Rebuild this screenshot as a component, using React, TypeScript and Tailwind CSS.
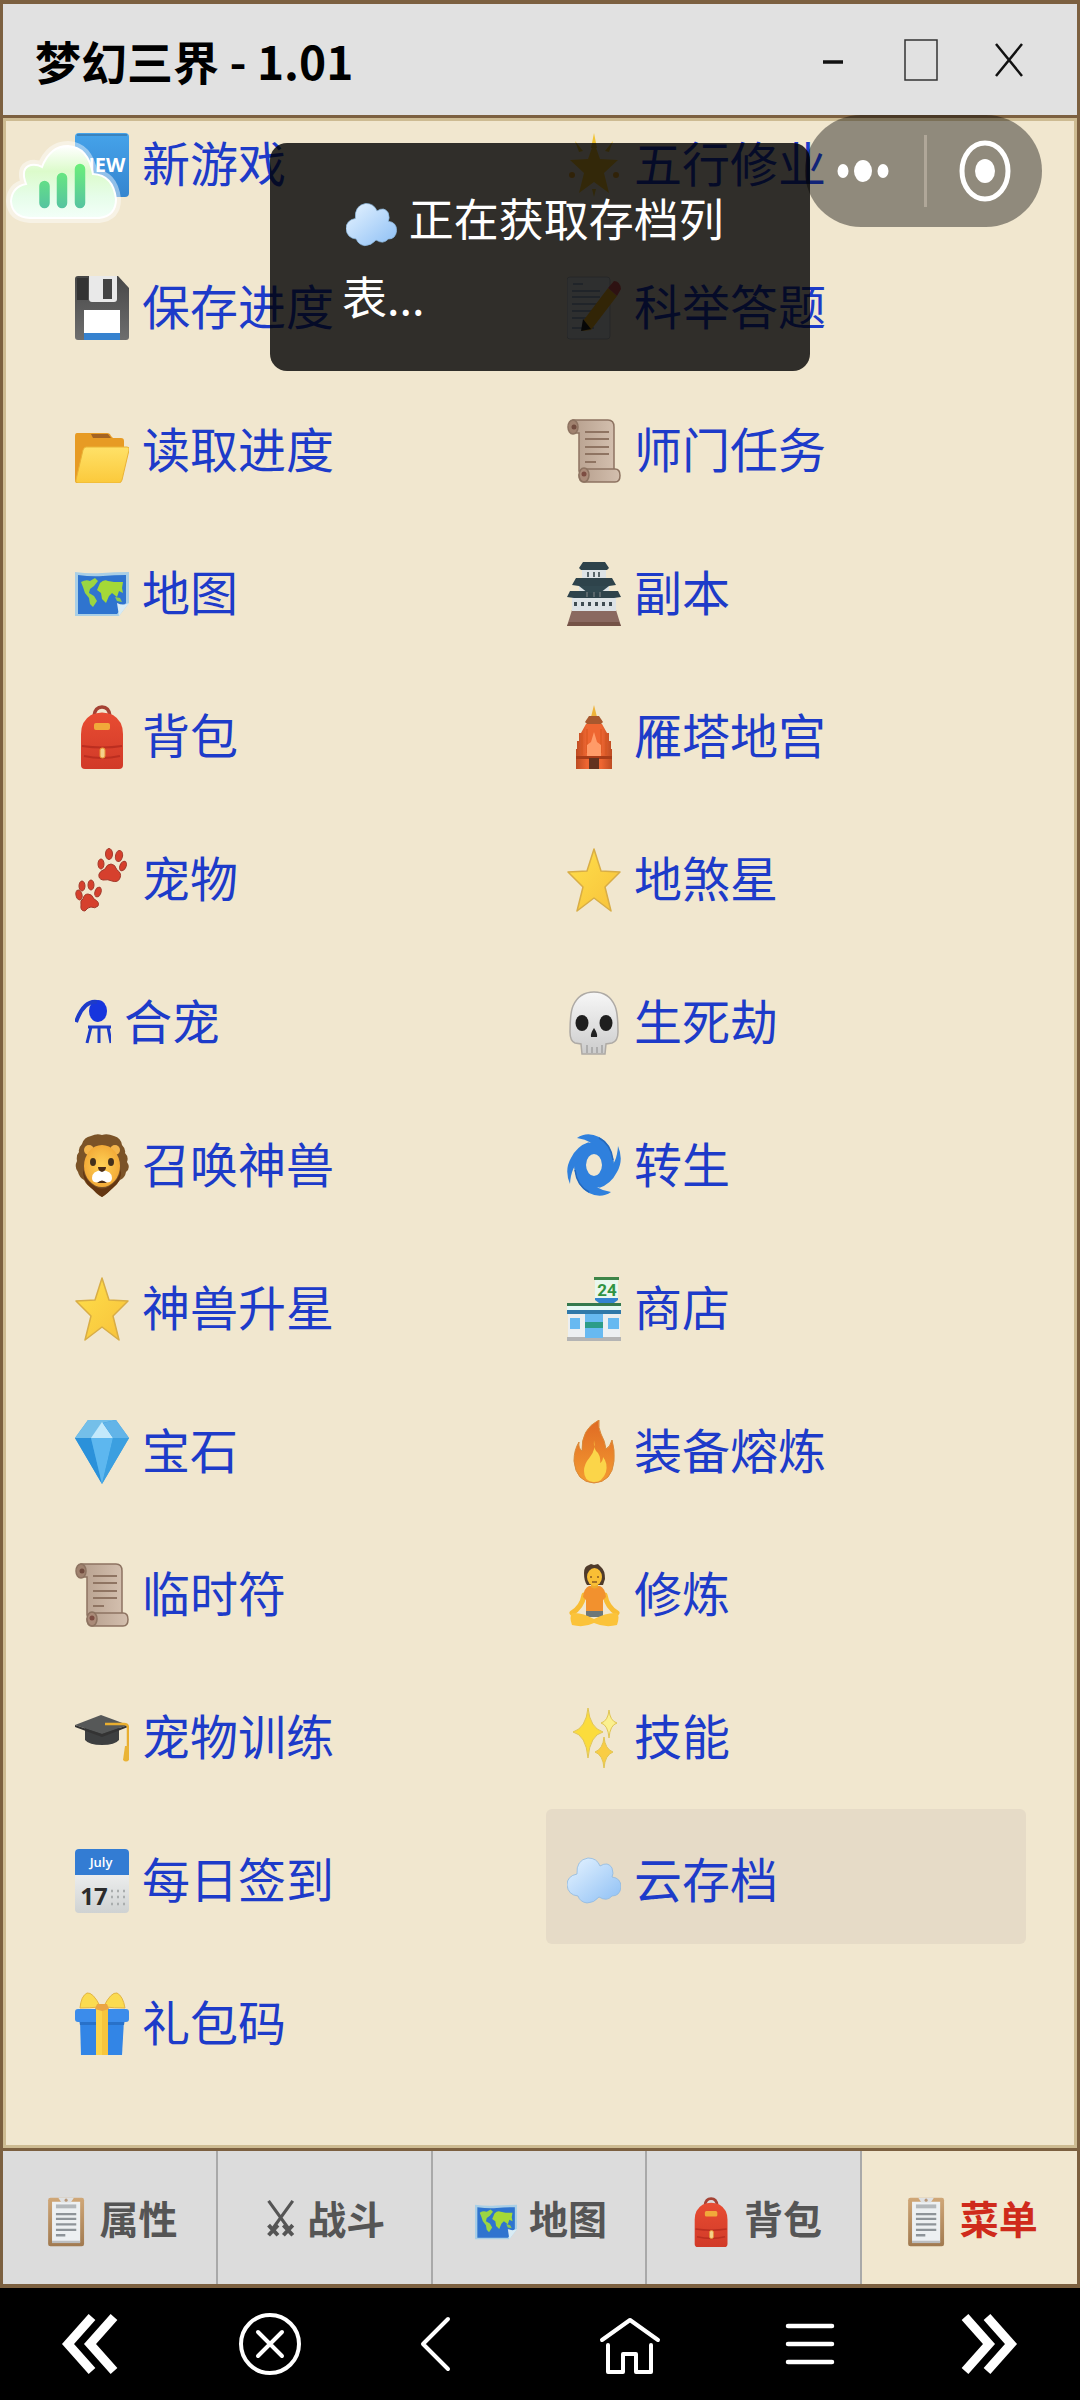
import { useState, type ReactNode } from "react";

const art: Record<string, ReactNode> = {
  new: (
    <>
      <defs><linearGradient id="gNew" x1="0" y1="0" x2="0" y2="1"><stop offset="0" stopColor="#45a3ea" /><stop offset="1" stopColor="#3585cf" /></linearGradient></defs>
      <rect width="54" height="64" rx="4" fill="url(#gNew)" />
      <path d="M2 2h50" stroke="#3a83bd" strokeWidth="2" />
      <text x="27" y="39" textAnchor="middle" fontFamily="Open Sans, sans-serif" fontWeight="700" fontSize="20" fill="#fff">NEW</text>
    </>
  ),
  save: (
    <>
      <defs><linearGradient id="gSave" x1="0" y1="0" x2="0" y2="1"><stop offset="0" stopColor="#474747" /><stop offset="1" stopColor="#6e6e6e" /></linearGradient></defs>
      <path d="M3 0h40l11 12v49q0 3-3 3H3q-3 0-3-3V3q0-3 3-3z" fill="url(#gSave)" />
      <path d="M2 2h11v22H2z" fill="#333" />
      <path d="M14 0h28v23q0 3-3 3H17q-3 0-3-3z" fill="#e9e9e9" />
      <path d="M28 3h9v20h-9z" fill="#444" />
      <path d="M9 34h36v23H9z" fill="#fff" />
      <path d="M9 57h36v7H9z" fill="#3682cf" />
    </>
  ),
  folder: (
    <>
      <defs><linearGradient id="gFold" x1="0" y1="0" x2="0" y2="1"><stop offset="0" stopColor="#ffe168" /><stop offset="1" stopColor="#fbc93b" /></linearGradient></defs>
      <path d="M2 14h30q3 0 4 3l2 2h8q3 0 3 3v14L5 64H2q-2 0-2-3V17q0-3 2-3z" fill="#e79b24" />
      <path d="M16 15h17l3 4H18z" fill="#a36322" />
      <path d="M11 28h41q3 0 2 3l-7 30q-1 3-3 3H3q-3 0-2-3l7-30q1-3 3-3z" fill="url(#gFold)" stroke="#eab235" strokeWidth="1" />
    </>
  ),
  map: (
    <>
      <path d="M0 10q14 2 27 1t27-1v31L44 54H0z" fill="#a9cfe6" />
      <path d="M3 13q14 2 25 1t23-1v28L42 52H3z" fill="#2f74cf" />
      <path d="M6 20q5-3 9-1l5-3 3 3-4 5-4 3-1 4 5 3 3 5-4 6-3-3-1-6-4-5-2-6z" fill="#9bd542" />
      <path d="M25 21q4-4 8-2l6 1 9 0-1 6 1 5-4-2-2 6-5-4-3 3-3 7-4-4-1-6-4-3z" fill="#a4d937" />
      <path d="M40 35l5 1 2 4-5-1z" fill="#8fcb4d" />
      <path d="M54 41L44 54l-2-13q6 3 12 0z" fill="#d9ecf5" />
    </>
  ),
  bag: (
    <>
      <defs><linearGradient id="gBag" x1="0" y1="0" x2="0" y2="1"><stop offset="0" stopColor="#e84c32" /><stop offset="1" stopColor="#d13a28" /></linearGradient></defs>
      <path d="M19 11q1-9 8-9t8 9" fill="none" stroke="#a54234" strokeWidth="3.5" />
      <path d="M16 10q11-5 22 0 10 6 10 19v31q0 4-4 4H10q-4 0-4-4V29q0-13 10-19z" fill="url(#gBag)" />
      <path d="M7 41q20 3 40 0M9 51q18 4 36 0" stroke="#bb2e20" strokeWidth="2" fill="none" />
      <rect x="19" y="18" width="16" height="7" rx="2" fill="#f1a93a" />
      <rect x="25" y="43" width="5" height="10" rx="2" fill="#f5d28a" stroke="#e79030" />
    </>
  ),
  paws: (
    <g fill="#d6402d" stroke="#a33a2c" strokeWidth="1">
      <path d="M36 16q4 0 6 6 5 3 3 8-2 5-8 3-4-2-9-1-5-1-4-6 1-3 6-5 2-5 6-5z" />
      <ellipse cx="26" cy="16" rx="3" ry="5" /><ellipse cx="34" cy="6" rx="3.5" ry="5.5" />
      <ellipse cx="44" cy="8" rx="3.5" ry="5.5" transform="rotate(12 44 8)" /><ellipse cx="48" cy="18" rx="3" ry="5" transform="rotate(25 48 18)" />
      <path d="M13 46q4 0 6 5 6 3 4 7-3 3-7 1-3 0-6 4-5 0-4-6-1-5 2-6 1-5 5-5z" />
      <ellipse cx="4" cy="47" rx="3" ry="5" transform="rotate(-15 4 47)" /><ellipse cx="7" cy="38" rx="3" ry="5" />
      <ellipse cx="16" cy="37" rx="3" ry="5" /><ellipse cx="23" cy="44" rx="3" ry="5" transform="rotate(20 23 44)" />
    </g>
  ),
  flask: (
    <g fill="none" stroke="#1d3bc9" strokeWidth="3">
      <ellipse cx="23" cy="20" rx="9" ry="11" fill="#1735dd" stroke="none" />
      <path d="M1 31Q9 9 22 11" strokeWidth="4" />
      <path d="M13 36h23M16 36l-4 16M24 36v16M33 36l3 16" />
    </g>
  ),
  lion: (
    <>
      <defs><radialGradient id="gLion"><stop offset="0" stopColor="#ffd257" /><stop offset="1" stopColor="#f3ab38" /></radialGradient></defs>
      <path d="M27 1q5-2 12 1 7 2 8 9 4 4 3 8 4 4 2 9 4 6-1 10-1 6-6 8-4 6-9 9-5 6-9 8-5-2-9-8-6-3-9-9-5-3-6-8-4-5-1-11-1-6 2-9-1-4 3-8 2-7 9-8 6-3 11-1z" fill="#7b5327" />
      <path d="M8 35q2 12 13 18 6 3 12 0 11-6 13-18 1 12-8 19-6 6-11 9-6-4-11-9-9-8-8-19z" fill="#643611" />
      <ellipse cx="14" cy="16" rx="5" ry="5" fill="#f4b54c" /><ellipse cx="40" cy="16" rx="5" ry="5" fill="#f4b54c" />
      <ellipse cx="27" cy="32" rx="18" ry="21" fill="url(#gLion)" />
      <ellipse cx="18" cy="28" rx="3" ry="4" fill="#43301c" /><ellipse cx="36" cy="28" rx="3" ry="4" fill="#43301c" />
      <path d="M27 36q10 1 10 8 0 6-10 4-10 2-10-4 0-7 10-8z" fill="#fff" />
      <path d="M23 33h8q0 4-4 5-4-1-4-5zM22 49q5-5 10 0z" fill="#4a2c17" />
    </>
  ),
  star: (
    <>
      <defs><linearGradient id="gStar" x1="0" y1="0" x2="1" y2="1"><stop offset="0" stopColor="#ffe04b" /><stop offset="1" stopColor="#f7c13a" /></linearGradient></defs>
      <path d="M27 1l7 22 19 1-15 15 6 24-17-13-17 13 6-24L1 24l19-1z" fill="url(#gStar)" stroke="#d8ad46" strokeWidth="1.5" strokeLinejoin="round" />
    </>
  ),
  gem: (
    <>
      <path d="M13 0h28l13 18-27 46L0 18z" fill="#3ba0e3" />
      <path d="M13 0h28L27 3 17 18 0 18z" fill="#74bfe9" />
      <path d="M27 2l11 16H16z" fill="#c3e9fb" />
      <path d="M41 0l13 18H38L28 3z" fill="#62b4e8" />
      <path d="M0 18h16l11 46z" fill="#2b91da" /><path d="M16 18h22L27 64z" fill="#5db7ef" /><path d="M38 18h16L27 64z" fill="#3b9fe0" />
    </>
  ),
  scroll: (
    <>
      <defs><linearGradient id="gScr" x1="0" y1="0" x2="1" y2="0"><stop offset="0" stopColor="#b7a08e" /><stop offset="1" stopColor="#d3bfae" /></linearGradient></defs>
      <g stroke="#8d7361" strokeWidth="1.5">
        <path d="M6 1h35q6 0 6 7v44H12V14H6z" fill="url(#gScr)" />
        <path d="M17 50h31q5 0 5 6.5t-5 6.5H17q-5 0-5-7z" fill="url(#gScr)" />
        <ellipse cx="6" cy="8" rx="5" ry="7" fill="#a0826f" /><ellipse cx="17" cy="56" rx="5" ry="7" fill="#aa8b79" />
      </g>
      <circle cx="7" cy="8" r="2.5" fill="#704b3e" /><circle cx="17" cy="55" r="2.5" fill="#7d4d42" />
      <path d="M18 13h24M18 20h24M18 28h24M18 35h24M18 43h11" stroke="#8f7462" strokeWidth="2" />
    </>
  ),
  hat: (
    <>
      <path d="M10 20h34v14q-4 5-17 5t-17-5z" fill="#3d3f40" />
      <path d="M0 19L26 9l27 10-26 9z" fill="#565858" />
      <path d="M0 19l27 9 26-9v2L27 31 0 21z" fill="#333" />
      <path d="M30 18h19q4 0 4 4v21" fill="none" stroke="#e9ae2f" strokeWidth="2.5" />
      <path d="M50 40h4v14q-3 3-6 0z" fill="#eab436" />
    </>
  ),
  calendar: (
    <>
      <defs><linearGradient id="gCal" x1="0" y1="0" x2="0" y2="1"><stop offset="0" stopColor="#fff" /><stop offset="1" stopColor="#cfd2d2" /></linearGradient></defs>
      <rect width="54" height="64" rx="4" fill="url(#gCal)" />
      <path d="M4 0h46q4 0 4 4v22H0V4q0-4 4-4z" fill="#337cd3" />
      <text x="26" y="18" textAnchor="middle" fontFamily="Open Sans, sans-serif" fontWeight="600" fontSize="13" fill="#fff">July</text>
      <text x="19" y="56" textAnchor="middle" fontFamily="Open Sans, sans-serif" fontWeight="700" fontSize="24" fill="#2c2c2c">17</text>
      <path d="M36 42h14M36 48h14M36 55h14" stroke="#a9adad" strokeWidth="2.5" strokeDasharray="2 4" />
    </>
  ),
  gift: (
    <>
      <path d="M5 28h44l-2 35H6z" fill="#3285e6" />
      <path d="M4 27h46l-1 6H5z" fill="#2871c9" />
      <rect y="17" width="54" height="13" rx="3" fill="#3b8ceb" />
      <path d="M21 17h12v46H21z" fill="#fbd44b" /><path d="M27 17h6v46h-6z" fill="#f7c53c" />
      <path d="M25 14Q18 0 12 1 6 4 5 16q10 0 19-1zM29 14Q36 0 42 1q6 3 8 15-11 0-20-1z" fill="#fbdb50" stroke="#e2b542" strokeWidth="1" />
      <path d="M22 12h10l2 5-7 2-7-2z" fill="#eba544" />
    </>
  ),
  glow: (
    <>
      <path d="M27 9l6 17 18 1-14 13 5 20-15-11-15 11 5-20L3 27l18-1z" fill="#fcc72f" />
      <path d="M27 0l3 15h-6zM8 8l8 10-4 1zM46 8l-8 10 4 1zM27 64l-2-8h4z" fill="#f1c432" />
      <circle cx="5" cy="42" r="3" fill="#f0a92c" /><circle cx="49" cy="42" r="3" fill="#f0a92c" />
    </>
  ),
  memo: (
    <>
      <rect y="1" width="43" height="62" rx="3" fill="#e4e8ec" stroke="#b7bcc2" />
      <path d="M6 8h10M5 15h28M5 21h28M5 28h28M5 35h28M5 42h20M5 52h22" stroke="#9eb4cb" strokeWidth="2" />
      <path d="M41 12l9 8-26 34-9 1 1-10z" fill="#fbb71e" /><path d="M41 12l6-7q6 0 7 8l-4 7z" fill="#e35b5b" />
      <path d="M16 43l8 10-10 2z" fill="#232323" />
    </>
  ),
  castle: (
    <>
      <path d="M5 48h44l5 16H0z" fill="#8a6960" /><path d="M2 60h50l2 4H0z" fill="#755347" />
      <path d="M5 34h44v15H5zM12 21h30v13H12zM15 7h24v10H15z" fill="#dde3e6" />
      <path d="M16 0h22l4 6-2 2H14l-2-2zM9 16h36l4 7-7 1H12l-7-1zM3 29h48l3 6-7 1H7l-7-1z" fill="#2e434b" />
      <path d="M12 24h30l-9 7H21z" fill="#314850" />
      <path d="M21 10v5M27 10v5M32 10v5M20 30v5M27 30v5M33 30v5" stroke="#59666b" strokeWidth="2" />
      <path d="M7 42h40" stroke="#3f4c52" strokeWidth="4" strokeDasharray="3 4" />
    </>
  ),
  temple: (
    <>
      <defs><linearGradient id="gTem" x1="0" y1="0" x2="1" y2="0"><stop offset="0" stopColor="#bd4c22" /><stop offset=".3" stopColor="#ee6631" /><stop offset=".7" stopColor="#ee6631" /><stop offset="1" stopColor="#bd4c22" /></linearGradient></defs>
      <path d="M27 0l3 12h-6z" fill="#eeb33a" />
      <path d="M22 11h10l4 6-4 4H22l-4-4z" fill="#a8582e" />
      <path d="M19 19h16l5 9h2v8h2v8h1v20H9V44h1v-8h2v-8h2z" fill="url(#gTem)" />
      <path d="M15 28v22M20 24v24M34 24v24M39 28v22" stroke="#d4541f" strokeWidth="1" />
      <path d="M27 27l3 10 4 3v11H20V40l4-3z" fill="#ff9b68" />
      <path d="M9 51h36v3H9z" fill="#a83c18" /><path d="M22 53h10v11H22z" fill="#63321f" />
    </>
  ),
  skull: (
    <>
      <defs><linearGradient id="gSku" x1="0" y1="0" x2="0" y2="1"><stop offset="0" stopColor="#f7f7f7" /><stop offset="1" stopColor="#cccccc" /></linearGradient></defs>
      <path d="M27 1q15 0 21 14 3 7 3 26 0 9-6 11l-6 1-1 10H15l-1-10-6-1q-5-2-5-11 0-19 3-26Q12 1 27 1z" fill="url(#gSku)" stroke="#aeaaa5" strokeWidth="1.5" />
      <ellipse cx="15" cy="32" rx="6.5" ry="8" fill="#1e1e1e" /><ellipse cx="39" cy="32" rx="6.5" ry="8" fill="#1e1e1e" />
      <path d="M27 37q4 6 3 9h-6q-1-3 3-9z" fill="#222" />
      <path d="M20 54v8M25 56v6M30 56v6M35 54v8" stroke="#a3a3a3" strokeWidth="1.5" />
    </>
  ),
  cyclone: (
    <>
      <ellipse cx="27" cy="31" rx="14" ry="17" fill="none" stroke="#2f80dd" strokeWidth="12" />
      <path d="M10 4Q20-3 32 3 44 9 46 28L36 20Q26 6 10 4zM44 58Q34 65 22 59 10 53 8 34l10 8Q28 56 44 58zM51 12q6 14-1 26-6 12-18 16l8-18q10-6 11-24zM3 50Q-3 36 4 24 10 12 22 8l-8 18Q4 32 3 50z" fill="#2f80dd" />
      <path d="M32 4q12 6 14 22M22 58Q10 52 8 36" fill="none" stroke="#2468bb" strokeWidth="1.5" />
    </>
  ),
  shop: (
    <>
      <path d="M28 0h23v21H28z" fill="#e9f7ee" /><path d="M27 0h25v3H27z" fill="#3e8548" />
      <path d="M28 21h23v2l-4 3H32l-4-3z" fill="#3182d1" />
      <text x="40" y="19" textAnchor="middle" fontFamily="Roboto, sans-serif" fontWeight="700" fontSize="17" fill="#2f9343">24</text>
      <path d="M1 36h52v25H1z" fill="#eceff1" /><path d="M0 60h54v4H0z" fill="#b4b4b4" />
      <path d="M0 26h54v3H0z" fill="#35794d" /><path d="M0 29h54v4H0z" fill="#e6f8f5" /><path d="M0 33h54v4H0z" fill="#3079aa" />
      <path d="M3 41h10v11H3zM41 41h11v11H41zM18 37h18v24H18z" fill="#67b9f1" /><path d="M18 45h18v6H18z" fill="#2c9c88" />
    </>
  ),
  fire: (
    <>
      <defs><linearGradient id="gFire" x1="0" y1="0" x2="0" y2="1"><stop offset="0" stopColor="#df6a24" /><stop offset="1" stopColor="#f49b31" /></linearGradient></defs>
      <path d="M32 0q-1 8 2 14 4 7 5 15 4-2 6-9 3 10 2 21-2 21-20 22Q9 62 7 41q0-11 5-19-1 6 3 9Q14 9 32 0z" fill="url(#gFire)" stroke="#d98a39" />
      <path d="M27 20q-1 9 4 13 3 5 2 10 3-2 3-6 5 6 3 15-4 11-13 10-9-1-9-11 0-7 6-14 6-7 4-17z" fill="#fbd549" />
    </>
  ),
  yoga: (
    <>
      <path d="M17 32q-2 12-12 18M38 32q2 12 12 18" fill="none" stroke="#f8bd34" strokeWidth="5" strokeLinecap="round" />
      <path d="M22 23h11q5 2 6 11l-3 3v14H19V37l-3-3q1-9 6-11z" fill="#f2912e" />
      <path d="M24 18h7v6q-3 3-7 0z" fill="#eea92d" />
      <path d="M17 10q0-7 5-8l2-1 3 1 4-1 3 3q4 3 4 12l-2 6H20q-3-4-3-12z" fill="#4f3b2b" />
      <ellipse cx="27.5" cy="14" rx="7.500" ry="9" fill="#f9bf35" />
      <path d="M24 13v2M31 13v2M25 19h5" stroke="#8a5b22" strokeWidth="1.5" />
      <path d="M19 48h17v6H19z" fill="#6d7779" />
      <path d="M5 50q10-1 22 6 13-7 23-6 3 3 0 12-12 3-23-2-10 5-22 2-3-8 0-12z" fill="#fbc33a" />
    </>
  ),
  sparkles: (
    <g stroke="#e1c554" strokeWidth="1">
      <path d="M21 2q2 20 15 24-13 3-15 26-2-23-15-26Q19 22 21 2z" fill="#fbdc3c" />
      <path d="M42 4q1 11 8 13-7 2-8 15-1-13-8-15 7-2 8-13z" fill="#fbf08f" />
      <path d="M37 31q1 12 9 15-8 3-9 16-1-13-9-16 8-3 9-15z" fill="#f9cd45" />
    </g>
  ),
  cloud: (
    <>
      <defs><linearGradient id="gClo" x1="0" y1="0" x2="1" y2="1"><stop offset="0" stopColor="#e7f4ff" /><stop offset="1" stopColor="#8dbff5" /></linearGradient></defs>
      <path d="M10 25Q9 11 21 9q9 0 12 8 8-5 12 2 2 6 0 9 9 1 9 10-1 9-9 9-5 6-13 1-5 6-12 6-7-1-9-7-10-1-11-11 0-9 10-11z" fill="url(#gClo)" stroke="#8fb9df" strokeWidth=".8" />
    </>
  ),
  clipboard: (
    <>
      <defs><linearGradient id="gClip" x1="0" y1="0" x2="0" y2="1"><stop offset="0" stopColor="#d0a777" /><stop offset="1" stopColor="#a17a50" /></linearGradient></defs>
      <rect x="4" y="1" width="46" height="62" rx="3" fill="url(#gClip)" />
      <path d="M9 6h36v52H9z" fill="#edf0f2" /><path d="M9 56h36v3H9z" fill="#bcbec0" />
      <path d="M17 1h20l-4 6H21z" fill="#dfe1e3" /><circle cx="27" cy="4" r="2" fill="#b99878" />
      <path d="M14 12h26" stroke="#b4b8bb" strokeWidth="5" />
      <path d="M14 22h26M14 28h26M14 35h26M14 42h26M14 49h12" stroke="#8e9499" strokeWidth="3" />
    </>
  ),
  swords: (
    <g fill="none" stroke="#555">
      <path d="M2 5l26 36M33 5L7 41" strokeWidth="4" />
      <path d="M2 36l12 13M2 49l12-13M33 36L21 49M33 49L21 36" strokeWidth="5" />
    </g>
  ),
};

function Emoji({ name, size }: { name: string; size: string }) {
  const narrow = name === "flask" || name === "swords";
  return (
    <svg viewBox={narrow ? "0 0 36 64" : "0 0 54 64"} className={`${size} w-auto shrink-0`} aria-hidden="true">
      {art[name]}
    </svg>
  );
}

const menu = [
  ["new", "新游戏"], ["glow", "五行修业"],
  ["save", "保存进度"], ["memo", "科举答题"],
  ["folder", "读取进度"], ["scroll", "师门任务"],
  ["map", "地图"], ["castle", "副本"],
  ["bag", "背包"], ["temple", "雁塔地宫"],
  ["paws", "宠物"], ["star", "地煞星"],
  ["flask", "合宠"], ["skull", "生死劫"],
  ["lion", "召唤神兽"], ["cyclone", "转生"],
  ["star", "神兽升星"], ["shop", "商店"],
  ["gem", "宝石"], ["fire", "装备熔炼"],
  ["scroll", "临时符"], ["yoga", "修炼"],
  ["hat", "宠物训练"], ["sparkles", "技能"],
  ["calendar", "每日签到"], ["cloud", "云存档"],
  ["gift", "礼包码"],
];

const tabs = [
  ["clipboard", "属性"],
  ["swords", "战斗"],
  ["map", "地图"],
  ["bag", "背包"],
  ["clipboard", "菜单"],
];

// System navigation glyphs, drawn in a 64x64 box.
const navKeys: { label: string; icon: ReactNode }[] = [
  { label: "向左", icon: <path d="M34 5L10 32l24 27M56 5L32 32l24 27" strokeWidth="9" /> },
  { label: "关闭", icon: <><ellipse cx="32" cy="32" rx="29" ry="29" strokeWidth="4" /><path d="M20 20l24 24M44 20L20 44" strokeWidth="4" strokeLinecap="round" /></> },
  { label: "返回", icon: <path d="M30 7L5 32l25 25" strokeWidth="4" strokeLinecap="round" strokeLinejoin="round" /> },
  { label: "主页", icon: <path d="M4 28L32 8l28 20M10 33v27h15V42h13v18h15V33" strokeWidth="4" strokeLinecap="round" strokeLinejoin="round" /> },
  { label: "任务", icon: <path d="M10 14h44M10 32h44M10 50h44" strokeWidth="4.5" strokeLinecap="round" /> },
  { label: "向右", icon: <path d="M7 5l24 27L7 59M29 5l24 27-24 27" strokeWidth="9" /> },
];

export default function App() {
  const [selected, setSelected] = useState("云存档");
  const [tab, setTab] = useState("菜单");

  return (
    <div className="relative flex h-screen flex-col overflow-hidden bg-black font-['Noto_Sans_CJK_SC',sans-serif]">
      <div className="flex min-h-0 flex-1 flex-col border-x-[3px] border-y-4 border-[#7c6040] bg-[#f1e7cf]">
        <header className="flex h-[114px] shrink-0 items-center justify-between border-b-[3px] border-[#7c6040] bg-[#e1e1e1] pr-6 pl-8">
          <h1 className="text-[46px] leading-none font-bold text-black">梦幻三界 - 1.01</h1>
          <div className="flex">
            <button aria-label="最小化" className="flex h-20 w-[88px] items-center justify-center">
              <svg width="24" height="42" viewBox="0 0 24 42"><path d="M2 23h20" stroke="#111" strokeWidth="3.5" /></svg>
            </button>
            <button aria-label="最大化" className="flex h-20 w-[88px] items-center justify-center">
              <svg width="34" height="42" viewBox="0 0 34 42"><path d="M1 1h32v40H1z" fill="none" stroke="#333" strokeWidth="1.5" /></svg>
            </button>
            <button aria-label="关闭" className="flex h-20 w-[88px] items-center justify-center">
              <svg width="28" height="42" viewBox="0 0 28 42"><path d="M1 5l26 32M27 5L1 37" stroke="#111" strokeWidth="2.5" /></svg>
            </button>
          </div>
        </header>

        <main className="min-h-0 flex-1 overflow-hidden border-[3px] border-[#cdbb92] px-12">
          <div className="-mt-7 grid grid-cols-2 gap-x-3 gap-y-2">
            {menu.map(([icon, label]) => (
              <button
                key={label}
                onClick={() => setSelected(label)}
                className={`flex h-[135px] items-center gap-[13px] rounded-md px-[21px] text-[48px] leading-none text-[#1d3bc9] ${selected === label ? "bg-[#e6dbc7]" : ""}`}
              >
                <span className="mt-2"><Emoji name={icon} size="h-16" /></span>
                {label}
              </button>
            ))}
          </div>
        </main>

        <nav className="grid h-[136px] shrink-0 grid-cols-5 border-t-[3px] border-[#7c6040]">
          {tabs.map(([icon, label]) => (
            <button
              key={label}
              onClick={() => setTab(label)}
              className={`flex items-center justify-center gap-3 border-r-2 border-[#a9a9a9] pl-1 text-[39px] leading-none font-bold last:border-r-0 ${tab === label ? "bg-[#f1e7cf] text-[#cf2a1b]" : "bg-[#dcdcdc] text-[#555]"}`}
            >
              <span className="mt-2"><Emoji name={icon} size="h-[50px]" /></span>
              {label}
            </button>
          ))}
        </nav>
      </div>

      <footer className="grid h-28 shrink-0 grid-cols-6 bg-black">
        {navKeys.map((k) => (
          <button key={k.label} aria-label={k.label} className="flex items-center justify-center">
            <svg viewBox="0 0 64 64" className="size-16" fill="none" stroke="#fff">{k.icon}</svg>
          </button>
        ))}
      </footer>

      {/* host app capsule */}
      <div className="absolute top-[115px] right-[38px] flex h-28 w-[237px] items-center rounded-full bg-black/40">
        <button aria-label="更多" className="flex h-full flex-1 items-center justify-center pr-1">
          <svg width="54" height="24" viewBox="0 0 54 24" fill="#fff">
            <ellipse cx="7" cy="12" rx="5.5" ry="7" /><ellipse cx="27" cy="12" rx="9" ry="11" /><ellipse cx="47" cy="12" rx="5.5" ry="7" />
          </svg>
        </button>
        <span className="h-[72px] w-[3px] bg-[#b0a799]" />
        <button aria-label="退出" className="flex h-full flex-1 items-center justify-center">
          <svg width="52" height="62" viewBox="0 0 52 62">
            <ellipse cx="26" cy="31" rx="23" ry="28" fill="none" stroke="#fff" strokeWidth="5" /><ellipse cx="26" cy="31" rx="10" ry="12" fill="#fff" />
          </svg>
        </button>
      </div>

      <div role="status" className="absolute top-[143px] left-1/4 w-1/2 rounded-[17px] bg-black/80 px-[72px] py-9 text-[45px] leading-[78px] text-white">
        <span className="mr-3 inline-block pl-1 align-middle"><Emoji name="cloud" size="h-[60px]" /></span>
        正在获取存档列表...
      </div>

      {/* floating network helper */}
      <button aria-label="网络加速" className="absolute top-[132px] left-1">
        <svg width="122" height="100" viewBox="0 0 122 100">
          <defs>
            <linearGradient id="puff" x1="0" y1="0" x2="0" y2="1"><stop offset="0" stopColor="#fff" /><stop offset=".35" stopColor="#dcfbcb" /><stop offset=".7" stopColor="#e6fde9" /><stop offset="1" stopColor="#f3fff9" /></linearGradient>
            <linearGradient id="bars" x1="0" y1="30" x2="0" y2="76" gradientUnits="userSpaceOnUse"><stop offset="0" stopColor="#6cf078" /><stop offset="1" stopColor="#56c4a0" /></linearGradient>
          </defs>
          <path d="M26 86Q8 85 7 69q1-14 15-17-6-16 5-19 6-1 11 2 8-21 26-21 20 1 25 28 20 1 23 25 0 17-17 19z" fill="url(#puff)" stroke="#fff" strokeOpacity=".45" strokeWidth="10" />
          <path d="M26 86Q8 85 7 69q1-14 15-17-6-16 5-19 6-1 11 2 8-21 26-21 20 1 25 28 20 1 23 25 0 17-17 19z" fill="url(#puff)" stroke="#fff" strokeWidth="2" />
          <path d="M40.5 54v17M58 46v25M76 37v34" stroke="url(#bars)" strokeWidth="10.5" strokeLinecap="round" />
        </svg>
      </button>
    </div>
  );
}
